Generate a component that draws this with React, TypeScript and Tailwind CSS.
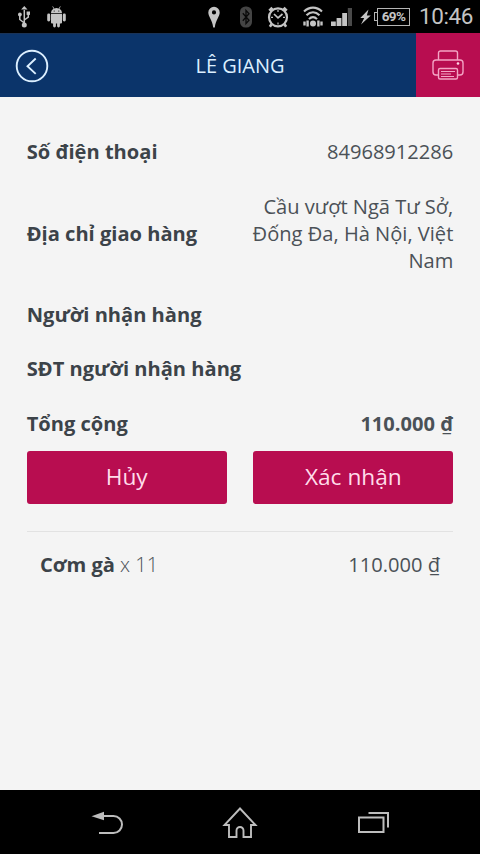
import type { ReactNode } from 'react';

interface DetailRowProps {
  label: string;
  children?: ReactNode;
  bold?: boolean;
}

function StatusBar() {
  return (
    <div className="flex h-[33px] items-center bg-black pr-[7px] pl-[18px] text-[#c4c4c4]">
      <svg className="h-[22px] w-3 shrink-0" viewBox="0 0 12 22" fill="none" stroke="currentColor" strokeWidth="1.5">
        <path d="M6.3 4v14M6.3 17l-4.5-3.5V9M6.3 14l4-3V8" />
        <path d="M6.3 0l3.2 3.5H3.1z" fill="currentColor" stroke="none" />
        <circle cx="6.3" cy="19" r="2.5" fill="currentColor" stroke="none" />
        <circle cx="1.9" cy="8.5" r="1.9" fill="currentColor" stroke="none" />
        <path d="M8.6 5.5H12v3.4H8.6z" fill="currentColor" stroke="none" />
      </svg>
      <svg className="ml-[17px] h-[22px] w-[19px] shrink-0" viewBox="0 0 19 22" fill="currentColor">
        <path d="M4 7.3C4 4.8 5.3 3.4 6.6 2.7L5.3.6l.6-.4 1.4 2.2a7 7 0 0 1 4.4 0L13.1.2l.6.4-1.3 2.1C13.7 3.4 15 4.8 15 7.3z" />
        <path d="M4 8h11v8.4a1 1 0 0 1-1 1h-1.1V20a1.4 1.4 0 0 1-2.8 0v-2.6H8.9V20a1.4 1.4 0 0 1-2.8 0v-2.6H5a1 1 0 0 1-1-1z" />
        <rect x="0.2" y="7.5" width="3" height="8" rx="1.4" />
        <rect x="15.8" y="7.5" width="3" height="8" rx="1.4" />
        <circle cx="7.2" cy="5" r=".6" fill="#000" />
        <circle cx="11.8" cy="5" r=".6" fill="#000" />
      </svg>
      <svg className="ml-[142px] h-[22px] w-3 shrink-0" viewBox="0 0 12 22" fill="currentColor" fillRule="evenodd">
        <path d="M6 .8A5.7 5.7 0 0 0 .3 6.5C.3 10.5 4.3 14 5.2 21.5h1.6C7.7 14 11.7 10.5 11.7 6.5A5.7 5.7 0 0 0 6 .8zm0 3.5a2.1 2.1 0 1 1 0 4.2 2.1 2.1 0 0 1 0-4.2z" />
      </svg>
      <svg className="ml-5 h-[22px] w-3 shrink-0" viewBox="0 0 12 22" fill="none">
        <rect y=".5" width="12" height="21" rx="5.5" fill="#444" />
        <path d="M2.8 7.3l6.2 7L6 17.5v-13l3 3.2-6.2 7" stroke="#090909" strokeWidth="1.3" />
      </svg>
      <svg className="ml-[15px] h-[22px] w-[22px] shrink-0" viewBox="0 0 22 22" fill="none" stroke="currentColor">
        <circle cx="11" cy="11.3" r="9" strokeWidth="2.2" />
        <path d="M7 8l4 3.8L15.5 8" strokeWidth="1.7" />
        <path d="M2.5 4.8l3-3M19.5 4.8l-3-3" strokeWidth="3.2" />
        <path d="M4.5 18.3l-1.6 2.5M17.5 18.3l1.6 2.5" strokeWidth="2.6" />
        <path d="M11 4v2M11 16.5v2M4 11.3h2M16 11.3h2" strokeWidth="1.2" />
      </svg>
      <svg className="ml-3.5 h-[22px] w-[22px] shrink-0" viewBox="0 0 22 22" fill="none" stroke="currentColor" strokeWidth="2.1">
        <path d="M1 5.5C6.5.3 13.5.3 19 5.5M3.5 9.3c4-4.1 9-4.1 13 0M6 13.1c2.4-2.7 5.6-2.7 8 0" />
        <circle cx="10" cy="17.5" r="3" fill="currentColor" stroke="none" />
        <path d="M4.6 14.5v6M15.4 14.5v6M1.5 15.6v3.8M18.5 15.6v3.8" strokeWidth="2.4" />
      </svg>
      <svg className="ml-[6px] h-[18px] w-[22px] shrink-0" viewBox="0 0 22 18" fill="currentColor">
        <path d="M0 13.5h4.8V18H0zM5.6 10h4.8v8H5.6zM11.2 5H16v13h-4.8z" />
        <path d="M16.8 0H21v18h-4.2z" fill="#4a4a4a" />
      </svg>
      <svg className="ml-[7px] h-4 w-[11px] shrink-0" viewBox="0 0 11 16" fill="currentColor">
        <path d="M8.5.5L.3 9h3.9L1 15.5 10.8 6.6H6.8z" />
      </svg>
      <div className="ml-[3px] flex shrink-0 items-center">
        <div className="h-[9px] w-[3px] border border-r-0 border-[#b5b5b5]" />
        <div className="flex h-[18px] w-[33px] items-center justify-center border border-[#b5b5b5] text-[13.5px] leading-none font-bold tracking-[-0.6px] [font-family:Roboto,sans-serif]">
          69%
        </div>
      </div>
      <span className="ml-auto text-[22.5px] leading-[33px] tracking-[-0.4px] [font-family:Roboto,sans-serif]">
        10:46
      </span>
    </div>
  );
}

function Header() {
  return (
    <header className="grid h-16 grid-cols-[64px_1fr_64px] border-t border-[#1a3357] bg-[#0b346a] text-[#dcefff]">
      <button className="flex items-center justify-center" aria-label="Quay lại">
        <svg className="h-[34px] w-[34px]" viewBox="0 0 34 34" fill="none" stroke="currentColor" strokeWidth="1.9">
          <circle cx="17" cy="17" r="15.3" />
          <path d="M20.7 9.5l-8.2 7.7 8.2 7.7" />
        </svg>
      </button>
      <h1 className="flex items-center justify-center text-[20px]">LÊ GIANG</h1>
      <button className="-mt-px flex items-center justify-center bg-[#b80d50]" aria-label="In">
        <svg className="h-[30px] w-8" viewBox="0 0 32 30" fill="none" stroke="#f3a4c4" strokeWidth="1.4">
          <path d="M6.5 10V3a2 2 0 0 1 2-2h15a2 2 0 0 1 2 2v7" />
          <path d="M6.5 25H4a3 3 0 0 1-3-3v-9a3 3 0 0 1 3-3h24a3 3 0 0 1 3 3v9a3 3 0 0 1-3 3h-2.5" />
          <rect x="6.5" y="18.5" width="19" height="10.5" rx="1.5" />
          <path d="M9 21.5h14M9 24h10M9 26.5h13" strokeWidth="1.2" />
          <circle cx="26" cy="13.5" r="1.3" fill="#ffd6e6" stroke="none" />
        </svg>
      </button>
    </header>
  );
}

function DetailRow({ label, children, bold }: DetailRowProps) {
  return (
    <div className="flex items-center justify-between py-[13.55px] leading-[27.15px]">
      <span className="font-bold whitespace-nowrap text-[#3c4349]">{label}</span>
      <span className={bold ? 'text-right font-bold' : 'w-[213px] text-right'}>{children}</span>
    </div>
  );
}

function NavBar() {
  return (
    <nav className="flex h-16 items-center bg-black px-10 pt-px text-[#bdbdbd]">
      <div className="flex flex-1 justify-center">
        <svg className="h-8 w-9" viewBox="0 0 36 32" fill="none" stroke="currentColor" strokeWidth="2">
          <path d="M13 9h11.5a8.5 8.5 0 0 1 0 17H10" />
          <path d="M2.5 9.3L15 4.7v8.6z" fill="currentColor" stroke="none" />
        </svg>
      </div>
      <div className="flex flex-1 justify-center">
        <svg className="h-8 w-9" viewBox="0 0 36 32" fill="none" stroke="currentColor" strokeWidth="1.9">
          <path d="M18 1.5L2.5 18H7v12h7.5v-6.5a3.5 3.5 0 0 1 7 0V30H29V18h4.5z" />
        </svg>
      </div>
      <div className="flex flex-1 justify-center">
        <svg className="h-8 w-9" viewBox="0 0 36 32" fill="none" stroke="currentColor" strokeWidth="2">
          <path d="M4 10.5h24.5V25H4z" />
          <path d="M13.5 6H33v14.5" />
        </svg>
      </div>
    </nav>
  );
}

export default function App() {
  return (
    <div className="flex h-[854px] w-[480px] flex-col overflow-hidden bg-[#f4f4f4] text-[20.1px] text-[#4b5157] [font-family:'Open_Sans',sans-serif]">
      <StatusBar />
      <Header />
      <main className="flex-1 px-[26.7px] pt-[27.8px]">
        <DetailRow label="Số điện thoại">84968912286</DetailRow>
        <DetailRow label="Địa chỉ giao hàng">Cầu vượt Ngã Tư Sở, Đống Đa, Hà Nội, Việt Nam</DetailRow>
        <DetailRow label="Người nhận hàng" />
        <DetailRow label="SĐT người nhận hàng" />
        <DetailRow label="Tổng cộng" bold>
          110.000 ₫
        </DetailRow>
        <div className="mt-[0.6px] grid h-[53px] grid-cols-2 gap-[26.7px] text-[22.7px] text-[#ffdcea]">
          <button className="rounded-[3px] bg-[#b80d50]">Hủy</button>
          <button className="rounded-[3px] bg-[#b80d50]">Xác nhận</button>
        </div>
        <div className="mt-[27px] flex items-center justify-between border-t border-[#e2e2e2] px-[13.3px] pt-[18.8px] leading-[27px]">
          <span>
            <b className="text-[#3c4349]">Cơm gà</b> <span className="font-light">x 11</span>
          </span>
          <span>110.000 ₫</span>
        </div>
      </main>
      <NavBar />
    </div>
  );
}
